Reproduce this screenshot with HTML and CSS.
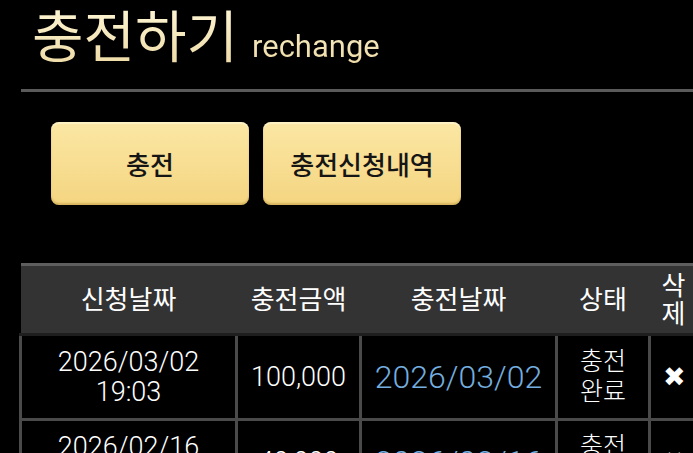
FILE: index.html
```html
<!DOCTYPE html>
<html lang="ko">
<head>
    <meta charset="UTF-8">
    <meta name="viewport" content="width=device-width, initial-scale=1.0">
    <title>충전하기</title>
    <link rel="stylesheet" href="styles.css">
</head>
<body>
    <div class="page">
        <h1 class="page-title">충전하기 <span class="sub">rechange</span></h1>
        <div class="title-line"></div>

        <!-- 탭 버튼 -->
        <div class="tabs">
            <a href="#" class="tab">충전</a>
            <a href="#" class="tab">충전신청내역</a>
        </div>

        <!-- 충전 신청 내역 -->
        <table class="history">
            <colgroup>
                <col class="c-req">
                <col class="c-amount">
                <col class="c-date">
                <col class="c-state">
                <col class="c-del">
            </colgroup>
            <thead>
                <tr>
                    <th>신청날짜</th>
                    <th>충전금액</th>
                    <th>충전날짜</th>
                    <th>상태</th>
                    <th>삭<br>제</th>
                </tr>
            </thead>
            <tbody>
                <tr>
                    <td class="num">2026/03/02<br>19:03</td>
                    <td class="num">100,000</td>
                    <td class="date">2026/03/02</td>
                    <td class="state">충전<br>완료</td>
                    <td><a href="#" class="del">✖</a></td>
                </tr>
                <tr>
                    <td class="num">2026/02/16<br>14:27</td>
                    <td class="num">40,000</td>
                    <td class="date">2026/02/16</td>
                    <td class="state">충전<br>완료</td>
                    <td><a href="#" class="del">✖</a></td>
                </tr>
            </tbody>
        </table>
    </div>
</body>
</html>
```

FILE: styles.css
```css
html, body {
    margin: 0;
    background: #000;
    overflow: hidden;
}
body {
    font-family: Roboto, "Noto Sans CJK KR", sans-serif;
    color: #fff;
}
.page {
    padding-left: 21px;
    width: 690px;
}
.page-title {
    margin: 0;
    padding: 4px 0 0 11px;
    height: 82px;
    box-sizing: border-box;
    font-size: 56px;
    font-weight: 400;
    line-height: 68px;
    white-space: nowrap;
    background: linear-gradient(#fff8d8, #ead49a);
    -webkit-background-clip: text;
    background-clip: text;
    color: transparent;
}
.page-title .sub {
    font-size: 31px;
    margin-left: 0;
}
.title-line {
    height: 3px;
    margin-top: 7px;
    background: #5a5a5a;
    margin-right: -20px;
}

.tabs {
    display: flex;
    gap: 14px;
    margin: 30px 0 0 30px;
}
.tab {
    width: 198px;
    height: 83px;
    display: flex;
    align-items: center;
    justify-content: center;
    border-radius: 8px;
    background: linear-gradient(#fbe7a4, #f4d581);
    box-shadow: inset 0 -2px 2px rgba(160, 120, 30, 0.35), inset 0 2px 1px rgba(255, 250, 220, 0.6);
    color: #151515;
    font-size: 26px;
    font-weight: 500;
    text-decoration: none;
}

.history {
    margin: 58px 0 0 -2px;
    border-collapse: collapse;
    table-layout: fixed;
    width: 702px;
}
.c-req { width: 216px; }
.c-amount { width: 124px; }
.c-date { width: 196px; }
.c-state { width: 93px; }
.c-del { width: 73px; }

.history th {
    background: #333;
    height: 67px;
    padding: 0;
    font-size: 26px;
    font-weight: 400;
    line-height: 28px;
    border-top: 3px solid #5e5e5e;
    border-bottom: 3px solid #1e1e1e;
}
.history th:last-child {
    text-align: left;
    padding-left: 12px;
}
.history td {
    height: 82px;
    padding: 0;
    border: 3px solid #4a4a4a;
    text-align: center;
    font-size: 25px;
    line-height: 30px;
}
.history td.num {
    font-size: 27px;
    font-weight: 300;
}
.history td.date {
    font-size: 32px;
    font-weight: 300;
    color: #74addf;
}
.history td.state {
    font-weight: 300;
}
.history td:last-child {
    text-align: left;
    padding-left: 12px;
}
.del {
    color: #fff;
    font-family: "DejaVu Sans", sans-serif;
    font-size: 27px;
    text-decoration: none;
}
```
